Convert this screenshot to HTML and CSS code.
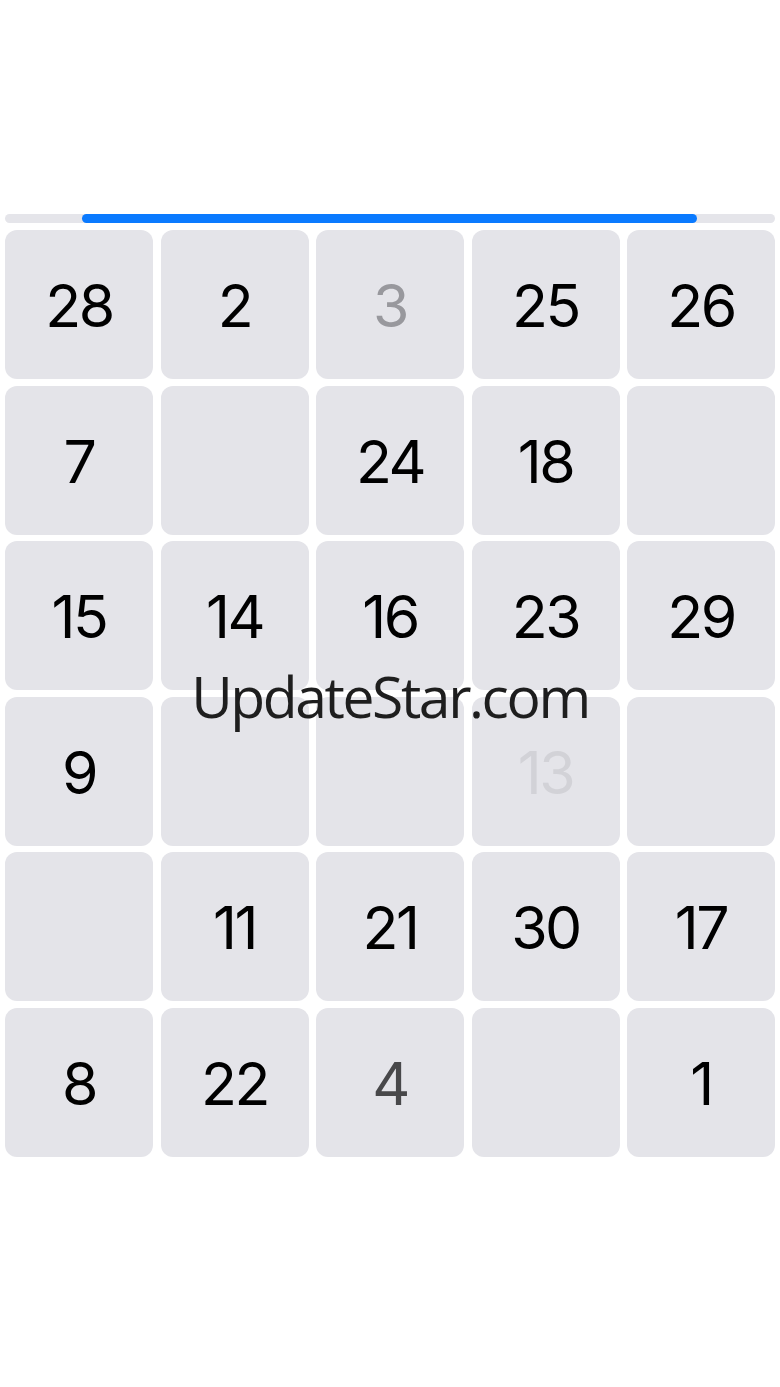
FILE: index.html
```html
<!DOCTYPE html>
<html>
<head>
<meta charset="utf-8">
<link rel="stylesheet" href="styles.css">
</head>
<body>
<div class="page">
  <div class="track"><div class="fill"></div></div>
  <div class="grid">
    <div class="cell">28</div><div class="cell">2</div><div class="cell gray">3</div><div class="cell">25</div><div class="cell">26</div>
    <div class="cell">7</div><div class="cell"></div><div class="cell">24</div><div class="cell">18</div><div class="cell"></div>
    <div class="cell">15</div><div class="cell">14</div><div class="cell">16</div><div class="cell">23</div><div class="cell">29</div>
    <div class="cell">9</div><div class="cell"></div><div class="cell"></div><div class="cell faint">13</div><div class="cell"></div>
    <div class="cell"></div><div class="cell">11</div><div class="cell">21</div><div class="cell">30</div><div class="cell">17</div>
    <div class="cell">8</div><div class="cell">22</div><div class="cell dark">4</div><div class="cell"></div><div class="cell">1</div>
  </div>
  <div class="watermark">UpdateStar.com</div>
</div>
</body>
</html>
```

FILE: styles.css
```css
html, body {
  margin: 0;
  padding: 0;
  background: #ffffff;
}
.page {
  position: relative;
  width: 780px;
  height: 1387px;
  padding: 214px 5px 0 5px;
  box-sizing: border-box;
}
.track {
  height: 9px;
  border-radius: 5px;
  background: #e5e5ea;
  position: relative;
  margin-bottom: 7px;
}
.fill {
  margin-left: 77px;
  width: 615px;
  height: 9px;
  border-radius: 5px;
  background: #0a7aff;
}
.grid {
  display: grid;
  grid-template-columns: repeat(5, 1fr);
  grid-auto-rows: 149px;
  column-gap: 7.5px;
  row-gap: 6.5px;
}
.cell {
  background: #e4e4e9;
  border-radius: 12px;
  display: flex;
  align-items: center;
  justify-content: center;
  font-family: Inter, "Liberation Sans", sans-serif;
  font-size: 59px;
  font-weight: 400;
  color: #000000;
  letter-spacing: -2.5px;
  padding-top: 2px;
}
.gray { color: #98989d; }
.dark { color: #48484a; }
.faint { color: #d2d2d7; }
.watermark {
  position: absolute;
  left: 0;
  right: 0;
  top: 662px;
  text-align: center;
  font-family: "Open Sans", "Noto Sans", sans-serif;
  font-size: 57px;
  font-weight: 380;
  letter-spacing: -2.4px;
  color: #1e1e1e;
  line-height: 1.2;
}
```
